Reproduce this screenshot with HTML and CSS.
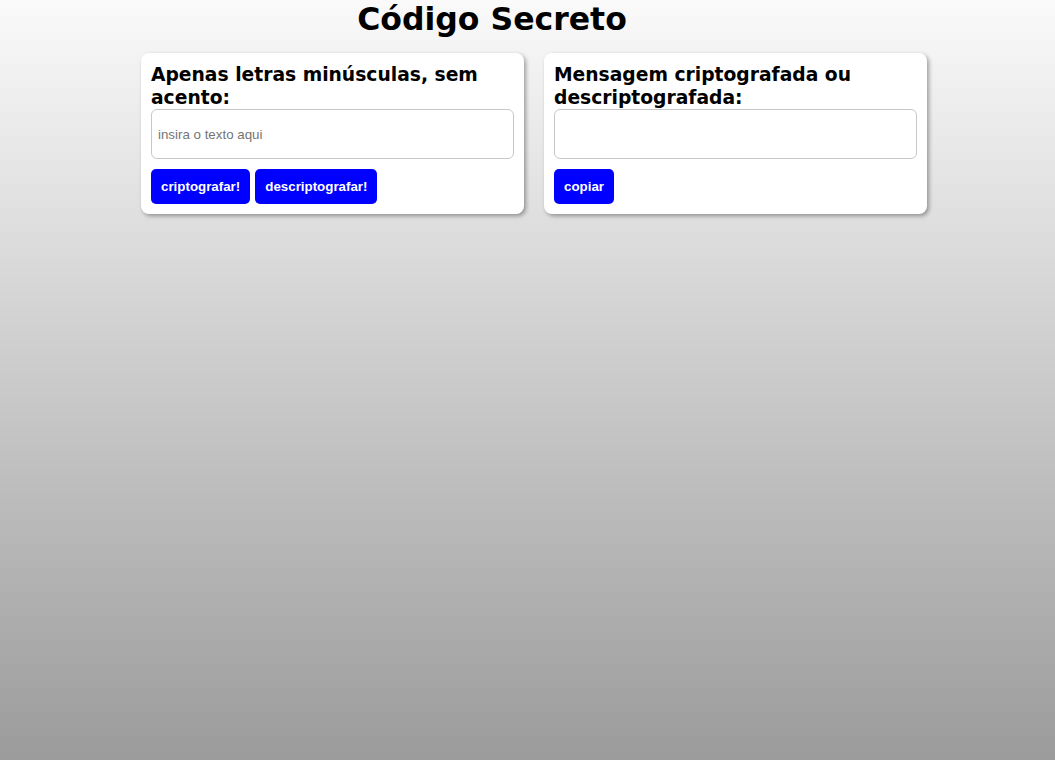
FILE: index.html
```html
<!DOCTYPE html>
<html lang="pt">
<head>
<meta charset="utf-8">
<title>Código Secreto</title>
<link rel="stylesheet" href="styles.css">
</head>
<body>
<div class="page">
  <h1 class="title">Código Secreto</h1>
  <div class="cards">
    <section class="card">
      <h2 class="card-title">Apenas letras minúsculas, sem acento:</h2>
      <input class="field" type="text" placeholder="insira o texto aqui">
      <div class="actions">
        <button class="btn">criptografar!</button>
        <button class="btn">descriptografar!</button>
      </div>
    </section>
    <section class="card">
      <h2 class="card-title">Mensagem criptografada ou descriptografada:</h2>
      <input class="field" type="text">
      <div class="actions">
        <button class="btn">copiar</button>
      </div>
    </section>
  </div>
</div>
</body>
</html>
```
FILE: styles.css
```css
html, body {
  margin: 0;
  padding: 0;
  height: 100%;
}
body {
  background: linear-gradient(to bottom, #fafafa 0%, #9b9b9b 100%);
  font-family: "DejaVu Sans", Verdana, sans-serif;
  color: #000;
}
.page {
  padding: 0 0 0 141px;
}
.title {
  margin: 0;
  width: 786px;
  padding: 0 84px 0 0;
  box-sizing: border-box;
  text-align: center;
  font-size: 31.5px;
  line-height: 38px;
  font-weight: bold;
}
.cards {
  display: flex;
  gap: 20px;
  margin-top: 15px;
}
.card {
  width: 383px;
  box-sizing: border-box;
  background: #fff;
  border-radius: 8px;
  padding: 10px;
  box-shadow: 2px 2px 4px rgba(0, 0, 0, 0.35);
}
.card-title {
  margin: 0;
  font-size: 18.72px;
  line-height: 23px;
  font-weight: bold;
}
.field {
  display: block;
  width: 363px;
  height: 50px;
  box-sizing: border-box;
  border: 1px solid #c8c8c8;
  border-radius: 6px;
  padding: 0 6px;
  font-family: "Liberation Sans", Arial, sans-serif;
  font-size: 13.33px;
  background: #fff;
  outline: none;
}
.field::placeholder {
  color: #757575;
}
.actions {
  display: flex;
  gap: 5px;
  margin-top: 10px;
}
.btn {
  height: 35px;
  padding: 0 10px;
  border: none;
  border-radius: 5px;
  background: #0000ff;
  color: #fff;
  font-family: "Liberation Sans", Arial, sans-serif;
  font-size: 13.33px;
  font-weight: bold;
  cursor: pointer;
}
```
